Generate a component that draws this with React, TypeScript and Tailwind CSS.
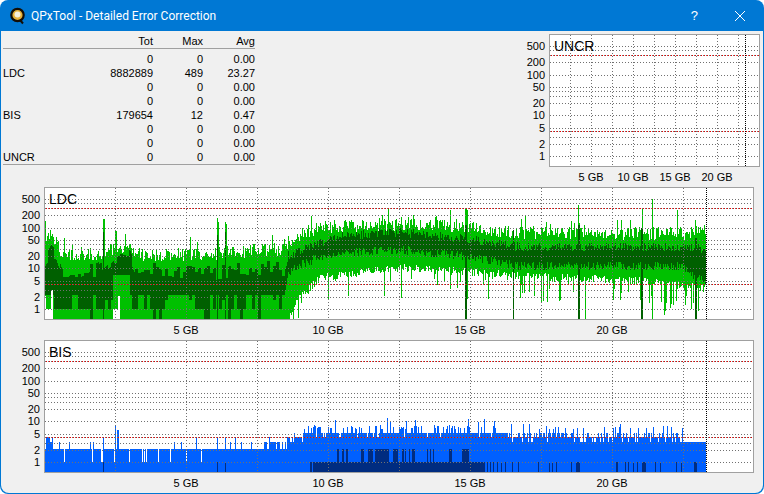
import React from "react";

const FONT = '"Liberation Sans", Arial, sans-serif';

function rng(seed: number) {
  let s = seed >>> 0;
  return () => {
    s = (s + 0x6d2b79f5) >>> 0;
    let t = s;
    t = Math.imul(t ^ (t >>> 15), t | 1);
    t ^= t + Math.imul(t ^ (t >>> 7), t | 61);
    return ((t ^ (t >>> 14)) >>> 0) / 4294967296;
  };
}

function lerp(pts: number[][], x: number) {
  for (let i = 0; i < pts.length - 1; i++) {
    if (x >= pts[i][0] && x <= pts[i + 1][0]) {
      const t = (x - pts[i][0]) / (pts[i + 1][0] - pts[i][0] || 1);
      return pts[i][1] + t * (pts[i + 1][1] - pts[i][1]);
    }
  }
  return pts[pts.length - 1][1];
}

// y offset (from plot top) of a value on the log axis; 1 sits 122px under the frame top
const vy = (v: number) => 122 - Math.log10(v) * 40.7;
const GRID = [1, 2, 3, 5, 10, 20, 30, 40, 50, 100, 200, 400, 500];
const LABELS = [1, 2, 5, 10, 20, 50, 100, 200, 500];

function Grid({ w, xs, black }: { w: number; xs: number[]; black: number }) {
  return (
    <g shapeRendering="crispEdges" strokeWidth={1}>
      {GRID.map((v) => (
        <line key={v} x1={1} x2={w - 1} y1={Math.round(vy(v)) + 0.5} y2={Math.round(vy(v)) + 0.5} stroke="#707070" strokeDasharray="1 2" />
      ))}
      {[4, 300].map((v) => (
        <g key={v}>
          <line x1={1} x2={w - 1} y1={Math.round(vy(v)) + 0.5} y2={Math.round(vy(v)) + 0.5} stroke="#707070" strokeDasharray="1 2" />
          <line x1={2} x2={w - 1} y1={Math.round(vy(v)) + 0.5} y2={Math.round(vy(v)) + 0.5} stroke="#f00000" strokeDasharray="1 2" />
        </g>
      ))}
      {xs.map((x) => (
        <line key={x} x1={x + 0.5} x2={x + 0.5} y1={1} y2={132} stroke="#707070" strokeDasharray="1 2" />
      ))}
      <line x1={black + 0.5} x2={black + 0.5} y1={1} y2={132} stroke="#000000" strokeDasharray="1 1" />
    </g>
  );
}

function col(x: number, a: number, b: number) {
  return `M${x} ${a.toFixed(0)}V${Math.min(b, 319).toFixed(0)}`;
}

function ldcPaths() {
  const r = rng(7);
  let light = "";
  let dark = "";
  const X0 = 44;
  const topEnv = [[44, 242], [50, 236], [55, 240], [60, 256], [100, 254], [130, 248], [140, 256], [200, 256], [280, 250], [288, 244], [300, 236], [320, 229], [345, 227], [400, 226], [450, 227], [480, 231], [520, 234], [700, 235], [705, 240]];
  const dTop = [[44, 262], [50, 252], [56, 256], [62, 272], [100, 268], [113, 256], [128, 254], [135, 270], [195, 272], [240, 270], [285, 268], [288, 258], [300, 250], [320, 243], [345, 236], [400, 232], [470, 240], [520, 247], [690, 247], [705, 250]];
  const dBot = [[44, 295], [112, 292], [113, 275], [130, 275], [132, 295], [285, 290], [288, 272], [300, 265], [320, 257], [345, 252], [400, 250], [470, 257], [520, 266], [680, 266], [705, 282]];
  const lBot = [[289, 319], [290, 309], [298, 296], [320, 273], [400, 264], [470, 268], [520, 272], [640, 277], [705, 284]];
  const lightSpikes: Record<number, number> = { 103: 219, 104: 219, 115: 231, 116: 231, 125: 234, 217: 218, 218: 222, 225: 222, 226: 224, 465: 208, 466: 208, 467: 210, 578: 205, 652: 199, 642: 208, 677: 210, 695: 220 };
  const darkCols: Record<number, number> = { 103: 232, 217: 235, 225: 232, 465: 225, 466: 225, 513: 230, 578: 225, 579: 225, 641: 228, 642: 228, 695: 238, 696: 238 };
  const lowSpikes: Record<number, number> = { 348: 296, 384: 296, 585: 319, 620: 300, 651: 296, 652: 319, 685: 305 };
  const q = [296.7, 309.3, 319];
  for (let px = 45; px < 706; px++) {
    const x = px - X0 + 0.5;
    const noiseAmp = px < 287 ? 14 : 13;
    let t = lerp(topEnv, px) + (r() - 0.6) * noiseAmp + (r() < 0.1 ? -r() * 12 : 0);
    if (lightSpikes[px]) t = lightSpikes[px];
    let b: number;
    if (px < 289) {
      b = 319;
      if (px < 46) b = 296;
      else if (px < 51) b = 309;
      else if (px < 53) b = 290;
      else if (px >= 113 && px < 118) b = 309;
      else if (px >= 118 && px < 120) b = 296;
    } else {
      b = lerp(lBot, px) + r() * 8;
      if (r() < 0.14) b += r() * 22;
      if (r() < 0.03) b = 296 + r() * 8;
      if (px > 640 && r() < 0.12) b = 300 + r() * 19;
      if (lowSpikes[px]) b = lowSpikes[px];
    }
    light += col(x, t, b);
    const block = Math.floor(px / 3);
    const br = rng(block * 97 + 3);
    const dt = px < 289 ? lerp(dTop, px) + (br() - 0.5) * 17 : lerp(dTop, px) + (r() - 0.5) * 9;
    let db: number;
    if (px < 289) {
      const v = br();
      db = lerp(dBot, px);
      if (px > 53 && px < 285 && !(px >= 113 && px < 130)) {
        db = v < 0.55 ? q[1] : v < 0.68 ? q[2] : v < 0.9 ? q[0] - 2 : q[0] + 3;
      }
      if (px > 165 && px < 195 && v < 0.85) db = q[0] - 2;
      if (px >= 250 && px < 285 && v < 0.4) db = q[0] - 2;
    } else {
      db = lerp(dBot, px) + (r() - 0.5) * 9;
    }
    dark += col(x, Math.max(dt, t), Math.min(db, b));
    if (darkCols[px]) dark += col(x, darkCols[px], 319);
  }
  return { light, dark };
}

function bisPaths() {
  const r = rng(21);
  let blue = "";
  let navy = "";
  const X0 = 44;
  const stripes: number[][] = [[337, 338], [342, 343], [346, 347], [361, 363], [368, 372], [375, 383], [384, 388], [393, 397], [402, 403], [405, 405], [409, 409], [412, 413], [414, 414], [427, 427], [430, 430], [433, 433], [449, 451], [462, 468]];
  const lowStripes: number[][] = [[103, 103], [217, 217], [225, 225], [310, 311], [313, 483], [484, 484], [487, 487], [490, 490], [493, 493], [497, 497], [501, 501], [505, 505], [512, 512], [518, 518], [538, 538], [549, 549], [552, 552], [556, 556], [571, 571], [576, 579], [616, 617], [625, 625], [628, 628], [633, 633], [637, 637], [642, 645], [655, 655], [660, 660], [676, 676], [681, 681], [694, 696]];
  for (let px = 45; px < 706; px++) {
    const x = px - X0 + 0.5;
    let top: number;
    const u = r();
    if (px < 260) {
      top = 449;
      if (u < 0.07 && px > 50) top = 462;
      else if (u < 0.14) top = 442;
      else if (u < 0.16) top = 437;
      if (px >= 46 && px <= 52) top = u < 0.5 ? 437 : 442;
    } else if (px < 287) {
      top = u < 0.2 ? 449 : 442;
      if (u > 0.9) top = 437;
      if (px < 270 && u < 0.55) top = 449;
    } else if (px < 304) {
      top = u < 0.2 ? 442 : 437;
      if (u > 0.85) top = 433;
    } else if (px < 505) {
      top = u < 0.1 ? 437 : 433;
      if (u > 0.6) top = 429 - r() * 4;
      if (u > 0.94) top = 422 - r() * 4;
    } else if (px < 683) {
      top = u < 0.22 ? 442 : 437;
      if (u > 0.6) top = 433;
      if (u > 0.84) top = 429 - r() * 3;
      if (u > 0.96) top = 424;
    } else {
      top = 442;
    }
    if (px === 115) top = 426;
    if (px === 117 || px === 118) top = 430;
    if (px === 103 || px === 217 || px === 225) top = 437;
    blue += `M${x} ${top.toFixed(0)}V472`;
  }
  stripes.forEach(([a, b]) => {
    for (let p = a; p <= b; p++) navy += `M${p - X0 + 0.5} 449V462`;
  });
  lowStripes.forEach(([a, b]) => {
    for (let p = a; p <= b; p++) navy += `M${p - X0 + 0.5} 462V472`;
  });
  return { blue, navy };
}

const LDC = ldcPaths();
const BIS = bisPaths();

function YAxis({ right }: { right: number }) {
  return (
    <g fill="#000" fontSize={11} textAnchor="end">
      {LABELS.map((v) => (
        <text key={v} x={right} y={vy(v) + 4}>
          {v}
        </text>
      ))}
    </g>
  );
}

const wideXs = Array.from({ length: 9 }, (_, i) => 71 * (i + 1));
const narrowXs = [21, 42, 63, 84, 105, 126, 147, 168, 189];

function Chart({ label, narrow, children }: { label: string; narrow?: boolean; children?: React.ReactNode }) {
  const w = narrow ? 211 : 710;
  const axisW = narrow ? 46 : 41;
  const ticks: [string, number][] = narrow
    ? [["5 GB", 42], ["10 GB", 84], ["15 GB", 126], ["20 GB", 168]]
    : [["5 GB", 142], ["10 GB", 284], ["15 GB", 426], ["20 GB", 568]];
  return (
    <svg width={axisW + w} height={153} className="block shrink-0" style={{ fontFamily: FONT }}>
      <YAxis right={axisW - 4} />
      <g transform={`translate(${axisW},0)`}>
        <rect x={0.5} y={0.5} width={w - 1} height={132} fill="#fff" stroke="#a0a0a0" />
        {children}
        <Grid w={w} xs={narrow ? narrowXs : wideXs} black={narrow ? 196 : 662} />
        <text x={5} y={17} fontSize={14} fill="#000">
          {label}
        </text>
        {ticks.map(([t, x]) => (
          <text key={t} x={x} y={147} fontSize={11} fill="#000" textAnchor="middle">
            {t}
          </text>
        ))}
      </g>
    </svg>
  );
}

const ROWS = [
  ["", "0", "0", "0.00"],
  ["LDC", "8882889", "489", "23.27"],
  ["", "0", "0", "0.00"],
  ["", "0", "0", "0.00"],
  ["BIS", "179654", "12", "0.47"],
  ["", "0", "0", "0.00"],
  ["", "0", "0", "0.00"],
  ["UNCR", "0", "0", "0.00"],
];

function Logo() {
  return (
    <svg width={16} height={18} viewBox="0 0 16 18" className="shrink-0">
      <circle cx={7.5} cy={8} r={6.2} fill="#e8b23a" stroke="#140e06" strokeWidth={2.2} />
      <circle cx={7.5} cy={7.5} r={3} fill="#f7f0dc" />
      <path d="M10 13l3 3.5" stroke="#140e06" strokeWidth={2} />
    </svg>
  );
}

export default function App() {
  return (
    <div className="w-[764px] h-[494px] bg-white overflow-hidden">
      <div className="w-full h-full flex flex-col rounded-lg overflow-hidden bg-[#0078d4] px-px pb-px" style={{ fontFamily: FONT }}>
        <div className="h-[31px] shrink-0 flex items-center text-white pl-[9px]">
          <Logo />
          <span className="ml-[5px] text-[12px] whitespace-nowrap" style={{ fontFamily: 'Roboto, sans-serif' }}>
            QPxTool - Detailed Error Correction
          </span>
          <span className="ml-auto mr-[36px] text-[13px]">?</span>
          <svg width={12} height={12} viewBox="0 0 12 12" className="mr-[17px]">
            <path d="M1 1l10 10M11 1L1 11" stroke="#fff" strokeWidth={1} fill="none" />
          </svg>
        </div>
        <div className="flex-1 bg-[#f0f0f0] flex flex-col min-h-0 rounded-b-lg">
          <div className="flex h-[156px] shrink-0">
            <div className="w-[252px] ml-[2px] mt-[3px] text-[11px] leading-[14px] text-black">
              <div className="grid grid-cols-[100px_50px_50px_52px] auto-rows-[14px] border-b border-[#a0a0a0]">
                <span />
                <span className="text-right">Tot</span>
                <span className="text-right">Max</span>
                <span className="text-right">Avg</span>
              </div>
              <div className="grid grid-cols-[100px_50px_50px_52px] auto-rows-[14px] pt-[3px] border-b border-[#a0a0a0]">
                {ROWS.map((r, i) => (
                  <React.Fragment key={i}>
                    <span>{r[0]}</span>
                    <span className="text-right">{r[1]}</span>
                    <span className="text-right">{r[2]}</span>
                    <span className="text-right">{r[3]}</span>
                  </React.Fragment>
                ))}
              </div>
            </div>
            <div className="ml-auto mr-[3px] mt-[3px]">
              <Chart label="UNCR" narrow />
            </div>
          </div>
          <div className="flex flex-col pl-[2px]">
            <Chart label="LDC">
              <g transform="translate(0,-187)" shapeRendering="crispEdges" fill="none">
                <path d={LDC.light} stroke="#00c000" />
                <path d={LDC.dark} stroke="#006000" />
              </g>
            </Chart>
            <Chart label="BIS">
              <g transform="translate(0,-340)" shapeRendering="crispEdges" fill="none">
                <path d={BIS.blue} stroke="#0060ff" />
                <path d={BIS.navy} stroke="#002c80" />
              </g>
            </Chart>
          </div>
        </div>
      </div>
    </div>
  );
}
